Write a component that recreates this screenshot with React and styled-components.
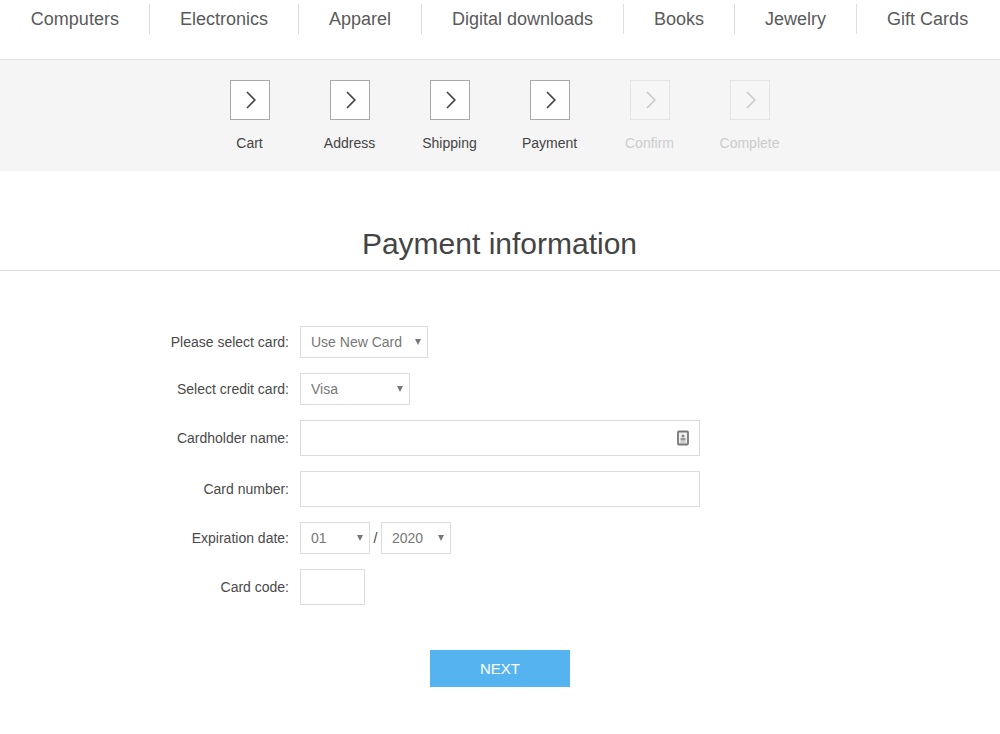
import { createGlobalStyle, styled } from "styled-components";

const GlobalStyle = createGlobalStyle`
  html, body {
    margin: 0;
    padding: 0;
    background: #fff;
  }
  body {
    font-family: "Liberation Sans", Arial, sans-serif;
    color: #444;
  }
`;

const Page = styled.div`
  width: 1000px;
  height: 734px;
  overflow: hidden;
`;

const TopMenu = styled.ul`
  display: flex;
  justify-content: center;
  margin: 0;
  padding: 4px 1px 25px 0;
  list-style: none;
  border-bottom: 1px solid #ddd;
`;

const MenuItem = styled.li`
  height: 30px;
  padding: 0 30px;
  line-height: 30px;
  font-size: 18px;
  color: #5a5a5a;
  white-space: nowrap;
  & + & {
    border-left: 1px solid #ddd;
  }
`;

const Progress = styled.ul`
  display: flex;
  justify-content: center;
  margin: 0;
  padding: 20px 0 0;
  height: 91px;
  list-style: none;
  background: #f5f5f5;
`;

const Step = styled.li`
  width: 100px;
  display: flex;
  flex-direction: column;
  align-items: center;
  font-size: 14px;
  color: ${(p) => (p.$off ? "#ccc" : "#444")};
`;

const StepBox = styled.span`
  box-sizing: border-box;
  width: 40px;
  height: 40px;
  display: flex;
  align-items: center;
  justify-content: center;
  background: ${(p) => (p.$off ? "#f6f6f6" : "#fff")};
  border: 1px solid ${(p) => (p.$off ? "#e4e4e4" : "#aaa")};
`;

const StepLabel = styled.span`
  margin-top: 15px;
  margin-right: 1px;
  line-height: 16px;
`;

const Title = styled.h1`
  margin: 0;
  padding: 55px 1px 8px 0;
  height: 36px;
  line-height: 36px;
  text-align: center;
  font-size: 30px;
  font-weight: 400;
  color: #444;
  border-bottom: 1px solid #ddd;
`;

const Form = styled.form`
  display: flex;
  flex-direction: column;
  gap: 15px;
  padding: 55px 0 0;
`;

const Row = styled.div`
  display: flex;
  align-items: center;
`;

const Label = styled.label`
  width: 289px;
  margin-right: 11px;
  text-align: right;
  font-size: 14px;
  color: #4a4a4a;
`;

const SelectWrap = styled.div`
  position: relative;
  display: flex;
  &::after {
    content: "";
    position: absolute;
    top: 13px;
    right: 7px;
    border-style: solid;
    border-width: 6px 3.5px 0;
    border-color: #777 transparent transparent;
    pointer-events: none;
  }
`;

const Select = styled.select`
  box-sizing: border-box;
  width: ${(p) => p.$w}px;
  height: 32px;
  padding: 0 10px;
  background: #fff;
  border: 1px solid #ddd;
  border-radius: 0;
  outline: none;
  appearance: none;
  font-family: "Liberation Sans", Arial, sans-serif;
  font-size: 14px;
  color: #777;
`;

const InputWrap = styled.div`
  position: relative;
  display: flex;
`;

const Input = styled.input`
  box-sizing: border-box;
  width: ${(p) => p.$w}px;
  height: 36px;
  padding: 0 10px;
  background: #fff;
  border: 1px solid #ddd;
  border-radius: 0;
  outline: none;
`;

const AutofillIcon = styled.svg`
  position: absolute;
  top: 10px;
  right: 10px;
`;

const Slash = styled.span`
  width: 11px;
  text-align: center;
  font-size: 14px;
  color: #444;
`;

const Actions = styled.div`
  display: flex;
  justify-content: center;
  margin-top: 30px;
`;

const NextButton = styled.button`
  width: 140px;
  height: 37px;
  padding: 0;
  background: #55b4f0;
  border: 0;
  font-family: "Liberation Sans", Arial, sans-serif;
  font-size: 15px;
  color: #fff;
`;

const Chevron = () => (
  <svg width="12" height="18" viewBox="0 0 12 18" fill="none">
    <path d="M3 1 L10.8 9 L3 17" stroke="currentColor" strokeWidth="1.7" />
  </svg>
);

const menu = ["Computers", "Electronics", "Apparel", "Digital downloads", "Books", "Jewelry", "Gift Cards"];

const steps = [
  { name: "Cart" },
  { name: "Address" },
  { name: "Shipping" },
  { name: "Payment" },
  { name: "Confirm", off: true },
  { name: "Complete", off: true },
];

const App = () => {
  return (
    <Page>
      <GlobalStyle />
      <TopMenu>
        {menu.map((item) => (
          <MenuItem key={item}>{item}</MenuItem>
        ))}
      </TopMenu>
      <Progress>
        {steps.map((step) => (
          <Step key={step.name} $off={step.off}>
            <StepBox $off={step.off}>
              <Chevron />
            </StepBox>
            <StepLabel>{step.name}</StepLabel>
          </Step>
        ))}
      </Progress>
      <Title>Payment information</Title>
      <Form>
        <Row>
          <Label>Please select card:</Label>
          <SelectWrap>
            <Select $w={128} defaultValue="new">
              <option value="new">Use New Card</option>
            </Select>
          </SelectWrap>
        </Row>
        <Row>
          <Label>Select credit card:</Label>
          <SelectWrap>
            <Select $w={110} defaultValue="visa">
              <option value="visa">Visa</option>
              <option value="mc">Master card</option>
            </Select>
          </SelectWrap>
        </Row>
        <Row>
          <Label>Cardholder name:</Label>
          <InputWrap>
            <Input $w={400} type="text" />
            <AutofillIcon width="14" height="16" viewBox="0 0 14 16">
              <rect x="2" y="1.5" width="10" height="13" rx="1" fill="#f0f0f0" stroke="#777" strokeWidth="1.8" />
              <circle cx="7" cy="6" r="1.5" fill="#888" />
              <rect x="4.5" y="8" width="5" height="2.5" fill="#999" />
              <rect x="4.5" y="11.5" width="5" height="1" fill="#aaa" />
            </AutofillIcon>
          </InputWrap>
        </Row>
        <Row>
          <Label>Card number:</Label>
          <Input $w={400} type="text" />
        </Row>
        <Row>
          <Label>Expiration date:</Label>
          <SelectWrap>
            <Select $w={70} defaultValue="01">
              <option value="01">01</option>
              <option value="02">02</option>
            </Select>
          </SelectWrap>
          <Slash>/</Slash>
          <SelectWrap>
            <Select $w={70} defaultValue="2020">
              <option value="2020">2020</option>
              <option value="2021">2021</option>
            </Select>
          </SelectWrap>
        </Row>
        <Row>
          <Label>Card code:</Label>
          <Input $w={65} type="text" />
        </Row>
        <Actions>
          <NextButton type="button">NEXT</NextButton>
        </Actions>
      </Form>
    </Page>
  );
};

export default App;
